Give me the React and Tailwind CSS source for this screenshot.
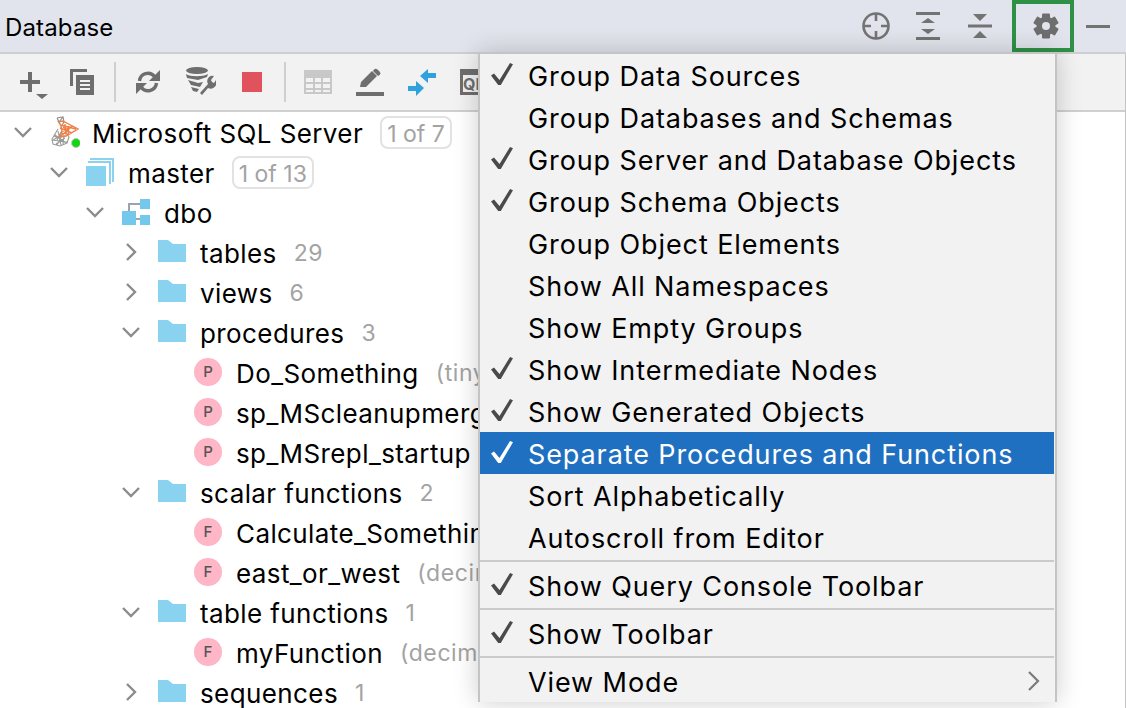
const FONT = "font-['Inter','Liberation_Sans',sans-serif]";

function Chevron({ open }) {
  return (
    <svg width="18" height="18" viewBox="0 0 18 18" fill="none" stroke="#8c8c8c" strokeWidth="2.4">
      {open ? <path d="M1 5l8 8 8-8" /> : <path d="M5 1l8 8-8 8" />}
    </svg>
  );
}

function Folder() {
  return (
    <svg className="-mt-[2px]" width="28" height="22" viewBox="0 0 28 22" fill="#8ad3f0">
      <path d="M0 0h10l5 4h13v18H0z" />
    </svg>
  );
}

function SqlIcon() {
  return (
    <svg className="shrink-0" width="32" height="32" viewBox="0 0 32 32" fill="none">
      <path d="M9 2l6-1 1 5-2 3M9 2l3 6M15 1l-4 5" stroke="#8f8f8f" strokeWidth="1.2" />
      <path d="M10 13L4 23l1 5 7 2 7-3 2-6-3-5M7 19l11 8M5 24l12-7M10 15l3 14M15 17l-6 12M4 24l15 2M9 24l4-8M6 20l7 3M8 28l9-6M16 19l-1 9" stroke="#9a9a9a" strokeWidth="1.1" />
      <path d="M10 5l3 5 1 6-3 5M15 5l15 8-12 7-7 1M12 9l16 4M12 12l12 5M13 16l12-6M17 8l1 11M21 10l-1 9M10 6l5-1M14 19l8-7M15 11l8 6" stroke="#f07f45" strokeWidth="1.4" />
      <circle cx="28" cy="27" r="4.5" fill="#10d910" stroke="#c4c4c4" strokeWidth="1" />
    </svg>
  );
}

function MasterIcon() {
  return (
    <svg width="28" height="28" viewBox="0 0 28 28">
      <path d="M4 0h24v24h-2V2H4z" fill="#8ad3f0" />
      <path d="M2 3h23v23h-2V5H2z" fill="#8ad3f0" />
      <rect x="0" y="8" width="20" height="20" fill="#8ad3f0" />
    </svg>
  );
}

function SchemaIcon() {
  return (
    <svg width="28" height="26" viewBox="0 0 28 26">
      <path d="M7 12V5h12M14 20h7" stroke="#9ba3ad" strokeWidth="2" fill="none" />
      <rect x="18" y="0" width="10" height="10" fill="#74c8ec" />
      <rect x="0" y="12" width="14" height="14" fill="#74c8ec" />
      <rect x="18" y="16" width="10" height="10" fill="#74c8ec" />
    </svg>
  );
}

function Badge({ letter }) {
  return (
    <span className="flex h-7 w-7 items-center justify-center rounded-full bg-[#ffb6c6] text-[15px] font-medium text-[#555]">
      {letter}
    </span>
  );
}

const ROWS = [
  { indent: "pl-[14px]", open: true, icon: <SqlIcon />, name: "Microsoft SQL Server", pill: "1 of 7" },
  { indent: "pl-[50px]", open: true, icon: <MasterIcon />, name: "master", pill: "1 of 13" },
  { indent: "pl-[86px]", open: true, icon: <SchemaIcon />, name: "dbo" },
  { indent: "pl-[122px]", open: false, icon: <Folder />, name: "tables", count: "29" },
  { indent: "pl-[122px]", open: false, icon: <Folder />, name: "views", count: "6" },
  { indent: "pl-[122px]", open: true, icon: <Folder />, name: "procedures", count: "3" },
  { indent: "pl-[158px]", icon: <Badge letter="P" />, name: "Do_Something", count: "(tinyint)" },
  { indent: "pl-[158px]", icon: <Badge letter="P" />, name: "sp_MScleanupmerge" },
  { indent: "pl-[158px]", icon: <Badge letter="P" />, name: "sp_MSrepl_startup" },
  { indent: "pl-[122px]", open: true, icon: <Folder />, name: "scalar functions", count: "2" },
  { indent: "pl-[158px]", icon: <Badge letter="F" />, name: "Calculate_Something" },
  { indent: "pl-[158px]", icon: <Badge letter="F" />, name: "east_or_west", count: "(decimal)" },
  { indent: "pl-[122px]", open: true, icon: <Folder />, name: "table functions", count: "1" },
  { indent: "pl-[158px]", icon: <Badge letter="F" />, name: "myFunction", count: "(decimal)" },
  { indent: "pl-[122px]", open: false, icon: <Folder />, name: "sequences", count: "1" },
];

function TreeRow({ row }) {
  return (
    <div className={`flex h-10 items-center whitespace-nowrap ${row.indent}`}>
      <span className="flex w-9 shrink-0 items-center">
        {row.open !== undefined && <Chevron open={row.open} />}
      </span>
      <span className="flex w-7 shrink-0 items-center justify-center">{row.icon}</span>
      <span className="ml-[14px] pt-[2px] text-[26px] tracking-[0.4px] text-black">{row.name}</span>
      {row.count && <span className="ml-[17px] pt-[2px] text-[23px] tracking-[0.6px] text-[#a3a3a3]">{row.count}</span>}
      {row.pill && (
        <span className="ml-[17px] h-[33px] rounded-[8px] border-2 border-[#e2e2e2] px-[5px] pt-[1px] text-[23px] leading-[30px] text-[#a3a3a3]">
          {row.pill}
        </span>
      )}
    </div>
  );
}

const GROUPS = [
  [
    { label: "Group Data Sources", checked: true },
    { label: "Group Databases and Schemas" },
    { label: "Group Server and Database Objects", checked: true },
    { label: "Group Schema Objects", checked: true },
    { label: "Group Object Elements" },
    { label: "Show All Namespaces" },
    { label: "Show Empty Groups" },
    { label: "Show Intermediate Nodes", checked: true },
    { label: "Show Generated Objects", checked: true },
    { label: "Separate Procedures and Functions", checked: true, active: true },
    { label: "Sort Alphabetically" },
    { label: "Autoscroll from Editor" },
  ],
  [{ label: "Show Query Console Toolbar", checked: true }],
  [{ label: "Show Toolbar", checked: true }],
  [{ label: "View Mode", submenu: true }],
];

function Check({ color }) {
  return (
    <svg className="-mt-[2px]" width="22" height="22" viewBox="0 0 22 22" fill={color}>
      <path d="M0 12.5L3 10.5l5.5 6.5L19 0l3 1.2L9.8 22H7.2z" />
    </svg>
  );
}

function MenuItem({ item }) {
  const bg = item.active ? "bg-[#1f70c1] text-white" : "text-black";
  return (
    <div className={`flex h-[42px] items-center whitespace-nowrap ${bg}`}>
      <span className="ml-[11px] flex w-[37px] shrink-0 items-center">
        {item.checked && <Check color={item.active ? "#fff" : "#4a4a4a"} />}
      </span>
      <span className="pt-[4px] text-[27px] tracking-[0.9px]">{item.label}</span>
      {item.submenu && (
        <svg className="ml-auto mr-[14px]" width="12" height="20" viewBox="0 0 12 20" fill="none" stroke="#7b7b7b" strokeWidth="2.2">
          <path d="M1 1l9 9-9 9" />
        </svg>
      )}
    </div>
  );
}

function Menu() {
  return (
    <div className="absolute left-[478px] top-[52px] w-[579px] border-x-2 border-t-2 border-[#c4c4c4] bg-[#f2f2f2] pr-[1px] shadow-[0_0_24px_rgba(0,0,0,0.2)]">
      {GROUPS.map((items, i) => (
        <div key={i} className={i > 0 ? "mt-[2px] border-t-2 border-[#cbcbcb] pt-[2px]" : ""}>
          {items.map((item) => (
            <MenuItem key={item.label} item={item} />
          ))}
        </div>
      ))}
    </div>
  );
}

function Toolbar() {
  return (
    <div className="flex h-[58px] items-center border-b-2 border-[#d0d0d0] bg-[#f2f2f2]">
      <svg className="ml-[20px]" width="30" height="34" viewBox="0 0 30 34" fill="#6e6e6e">
        <path d="M8 7h4v8h8v4h-8v8H8v-8H0v-4h8z" />
        <path d="M16 29h12l-6 5z" />
      </svg>
      <svg className="ml-[20px]" width="24" height="26" viewBox="0 0 24 26" fill="#6e6e6e">
        <path d="M0 0h17v3H3v14H0z" />
        <path d="M6 6h18v20H6zM10 11v2h10v-2zM10 15v2h10v-2zM10 19v2h10v-2z" fillRule="evenodd" />
      </svg>
      <div className="ml-[20px] h-10 w-[2px] bg-[#cfcfcf]" />
      <svg className="ml-[20px]" width="24" height="24" viewBox="0 0 24 24" fill="none">
        <path d="M3.5 11a8.5 8.5 0 0 1 15-4.6" stroke="#6e6e6e" strokeWidth="3.4" />
        <path d="M24 0v11H13z" fill="#6e6e6e" />
        <path d="M20.5 13a8.5 8.5 0 0 1-15 4.6" stroke="#6e6e6e" strokeWidth="3.4" />
        <path d="M0 24V13h11z" fill="#6e6e6e" />
      </svg>
      <svg className="ml-[26px]" width="30" height="30" viewBox="0 0 30 30" fill="#6e6e6e">
        <ellipse cx="11" cy="3.5" rx="11" ry="3.5" />
        <path d="M0 7c4 3 17 3 22 0l-1 3-9 3-11-2zM2 13l10 3 5-1-3 5-9-2zM5 20l8 2-2 3-4-1z" />
        <path d="M14 26l8-9a6 6 0 0 1 1-7 6 6 0 0 1 5-1l-3 4 1 2 2 1 2-3a6 6 0 0 1-8 8l-6 7z" />
      </svg>
      <div className="ml-[26px] h-5 w-5 bg-[#e0535d]" />
      <div className="ml-[22px] h-10 w-[2px] bg-[#cfcfcf]" />
      <svg className="ml-[18px]" width="28" height="24" viewBox="0 0 28 24" fill="#c8c8c8">
        <path d="M0 0h28v24H0zM2 8v4h7V8zM11 8v4h6V8zM19 8v4h7V8zM2 14v4h7v-4zM11 14v4h6v-4zM19 14v4h7v-4zM2 20v2h7v-2zM11 20v2h6v-2zM19 20v2h7v-2z" fillRule="evenodd" />
      </svg>
      <svg className="ml-[24px]" width="28" height="28" viewBox="0 0 28 28" fill="#6e6e6e">
        <path d="M4 19l1-5L16 3l5 5L10 19z" />
        <path d="M18 1.5a2.5 2.5 0 0 1 3.5 0l2 2a2.5 2.5 0 0 1 0 3.5L22 8l-5-5z" />
        <rect x="0" y="24" width="28" height="4" />
      </svg>
      <svg className="ml-[24px]" width="28" height="28" viewBox="0 0 28 28" fill="#2fa1dc">
        <path d="M12 8l8-7v4h8v5h-8v5z" />
        <path d="M16 20l-8 8v-5H0v-5h8v-5z" />
      </svg>
      <div className="ml-[24px] flex h-[26px] w-[26px] shrink-0 flex-col border-[3px] border-t-[6px] border-[#6e6e6e] text-[16px] font-bold leading-[18px] text-[#6e6e6e]">
        QL
      </div>
    </div>
  );
}

function Gear() {
  const teeth = [0, 60, 120];
  return (
    <svg width="26" height="26" viewBox="0 0 26 26">
      {teeth.map((a) => (
        <rect key={a} x="9" y="0.5" width="8" height="25" rx="1" fill="#6e6e6e" transform={`rotate(${a} 13 13)`} />
      ))}
      <circle cx="13" cy="13" r="9.5" fill="#6e6e6e" />
      <circle cx="13" cy="13" r="4" fill="#e1e4ec" />
    </svg>
  );
}

function TitleBar() {
  return (
    <div className="flex h-[54px] items-center justify-between border-b-2 border-[#cfcfcf] bg-[#e1e4ec]">
      <span className="ml-[5px] pt-[3px] text-[24px] tracking-[0.15px] text-black">Database</span>
      <div className="mr-[16px] flex items-center">
        <svg width="28" height="28" viewBox="0 0 28 28" fill="none" stroke="#737373" strokeWidth="2.6">
          <circle cx="14" cy="14" r="12.5" />
          <path d="M14 1v8M14 19v8M1 14h8M19 14h8" />
        </svg>
        <svg className="ml-[26px]" width="24" height="28" viewBox="0 0 24 28" fill="#737373">
          <path d="M0 0h24v3H0zM0 25h24v3H0zM12 6l7 5H5zM12 22l-7-5h14z" />
        </svg>
        <svg className="ml-[28px]" width="24" height="24" viewBox="0 0 24 24" fill="#737373">
          <path d="M0 10.5h24v3H0zM5 0h14l-7 7zM12 17l7 7H5z" />
        </svg>
        <div className="ml-[20px] flex h-[52px] w-[62px] items-center justify-center self-start border-4 border-[#2f9146] pl-[6px]">
          <Gear />
        </div>
        <div className="ml-[12px] h-[3px] w-6 bg-[#737373]" />
      </div>
    </div>
  );
}

export default function App() {
  return (
    <div className={`relative h-[708px] w-full overflow-hidden bg-white ${FONT}`}>
      <TitleBar />
      <Toolbar />
      <div>
        {ROWS.map((row) => (
          <TreeRow key={row.name} row={row} />
        ))}
      </div>
      <Menu />
      <div className="absolute right-0 top-[54px] h-[654px] w-[1px] bg-[#c4c4c4]" />
    </div>
  );
}
